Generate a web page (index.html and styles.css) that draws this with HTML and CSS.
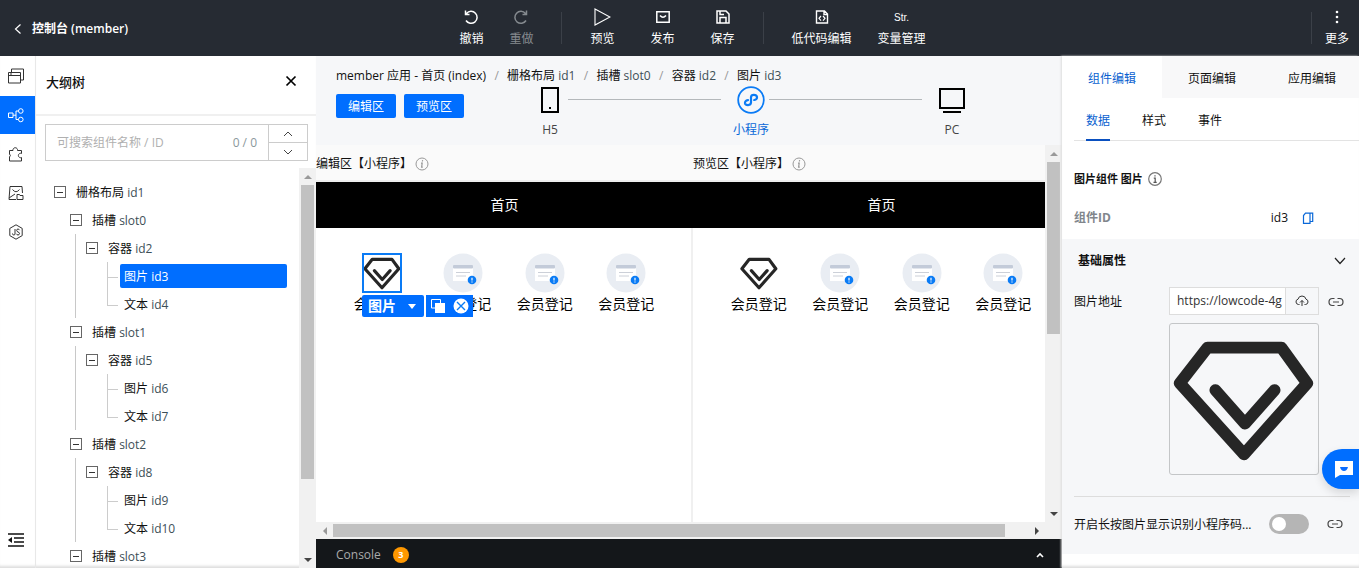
FILE: index.html
```html
<!DOCTYPE html>
<html lang="zh-CN">
<head>
<meta charset="utf-8">
<title>控制台 (member)</title>
<link rel="stylesheet" href="styles.css">
</head>
<body>
<svg class="defs" aria-hidden="true">
  <symbol id="gem" viewBox="0 0 150 152">
    <g fill="none" stroke="#262626" stroke-linecap="round" stroke-linejoin="round" stroke-width="12">
      <path d="M38 24H113L139 60L75 132L10 60Z"/>
      <path d="M46 67L76 101L106 67"/>
    </g>
  </symbol>
  <symbol id="card" viewBox="0 0 40 40">
    <circle cx="20" cy="20" r="19.500" fill="#e9edf3"/>
    <path d="M10 15H30V28H10Z" fill="#fff"/>
    <rect x="10" y="12" width="20" height="3.500" rx="1" fill="#c3cbd9"/>
    <path d="M13 19.500H27M13 23H23" stroke="#ccd0d8"/>
    <circle cx="29" cy="27" r="4.300" fill="#0a7bf5"/>
    <path d="M29 24.800V27.400M29 28.400V29.400" stroke="#fff" stroke-width="1.200"/>
  </symbol>
  <symbol id="link" viewBox="0 0 16 12">
    <path d="M6.500 2.500H4.500a3.500 3.500 0 0 0 0 7H6.500M9.500 2.500H11.500a3.500 3.500 0 0 1 0 7H9.500M5 6H11" fill="none" stroke="#444" stroke-width="1.200"/>
  </symbol>
  <symbol id="info" viewBox="0 0 14 14">
    <circle cx="7" cy="7" r="6" fill="none" stroke="currentColor"/>
    <path d="M7.600 3.200L7.400 4.500M6 6.200H7.200L6.600 10.200H7.800" fill="none" stroke="currentColor" stroke-width="1.200"/>
  </symbol>
</svg>

<header class="topbar">
  <div class="topbar-side">
    <a class="back" href="#"><svg width="8" height="12" viewBox="0 0 8 12"><path d="M6.500 1.500L1.500 6L6.500 10.500" fill="none" stroke="#fff" stroke-width="1.200"/></svg>控制台 (member)</a>
  </div>
  <nav class="actions">
    <div class="group">
      <button class="action"><svg viewBox="0 0 18 18"><path d="M4.500 5.500A6 6 0 1 1 4 12.500M3.500 2.500V6.500H7.500" fill="none" stroke="#fff" stroke-width="1.500"/></svg>撤销</button>
      <button class="action" disabled><svg viewBox="0 0 18 18"><path d="M13.500 5.500A6 6 0 1 0 14 12.500M14.500 2.500V6.500H10.500" fill="none" stroke="#858a8f" stroke-width="1.500"/></svg>重做</button>
    </div>
    <span class="rule"></span>
    <div class="group wide">
      <button class="action"><svg viewBox="0 0 18 18"><path d="M2 1L17 9L2 17Z" fill="none" stroke="#fff" stroke-width="1.100"/></svg>预览</button>
      <button class="action"><svg viewBox="0 0 18 18"><path d="M2.800 3.800H15.200V14.200H2.800ZM6 7.500Q9 11 12 7.500" fill="none" stroke="#fff" stroke-width="1.500"/></svg>发布</button>
      <button class="action"><svg viewBox="0 0 18 18"><path d="M3 3H12L15 6V15H3ZM6 15V9.500H12V15M6 3V6.500H10" fill="none" stroke="#fff" stroke-width="1.500"/></svg>保存</button>
    </div>
    <span class="rule"></span>
    <div class="group">
      <button class="action"><svg viewBox="0 0 18 18"><path d="M3.500 3H11.500L14.500 6V15H3.500ZM11 3V6.500H14.500" fill="none" stroke="#fff" stroke-width="1.400"/><path d="M8 8L6 10.300L8 12.600M10 8L12 10.300L10 12.600" fill="none" stroke="#fff" stroke-width="1.200"/></svg>低代码编辑</button>
      <button class="action"><span class="glyph">Str.</span>变量管理</button>
    </div>
  </nav>
  <div class="topbar-side end">
    <span class="rule"></span>
    <button class="action"><svg viewBox="0 0 18 18" fill="#fff"><circle cx="9" cy="4" r="1.300"/><circle cx="9" cy="9" r="1.300"/><circle cx="9" cy="14" r="1.300"/></svg>更多</button>
  </div>
</header>

<div class="workspace">
  <nav class="rail">
    <button aria-label="页面"><svg viewBox="0 0 16 16"><path d="M.500 4.500H12.500V15H.500ZM.500 7.500H12.500M3.500 4.500V1H15.500V12H12.500M2 6H4" fill="none" stroke="#333"/></svg></button>
    <button class="on" aria-label="大纲树"><svg viewBox="0 0 16 16"><g fill="none" stroke="#fff"><path d="M.500 6H5V10.500H.500ZM5 8.200H8M10.500 4H8V12.500H10.500"/><circle cx="12.800" cy="4" r="2.300"/><circle cx="12.800" cy="12.500" r="2.300"/></g></svg></button>
    <button aria-label="组件"><svg viewBox="0 0 16 16"><path d="M1.500 4.500H5A2.300 2.300 0 1 1 9.500 4.500H13.500V7.500A2.200 2.200 0 1 0 13.500 11.500V15H1.500V11A2 2 0 0 0 1.500 8Z" fill="none" stroke="#333"/></svg></button>
    <button aria-label="资源"><svg viewBox="0 0 16 16"><path d="M8 14.500H1L2 1.500H14L14.500 8M4.500 4.500Q8 9 11.500 4.500M1 13L7 9M9 9.500H11.500L12 10.500H15V14.500H9Z" fill="none" stroke="#333"/></svg></button>
    <button aria-label="脚本"><svg viewBox="0 0 16 16"><path d="M8 .800L14.200 4.400V11.600L8 15.200L1.800 11.600V4.400ZM7 5V10Q7 11 5.800 11Q4.500 11 4.500 9.500M11.500 6.200Q11 5 10 5Q8.700 5 8.700 6.400Q8.700 7.500 10 8Q11.600 8.500 11.500 9.600Q11.300 11 10 11Q8.800 11 8.500 9.800" fill="none" stroke="#333"/></svg></button>
    <button class="fold" aria-label="收起"><svg viewBox="0 0 18 16"><path d="M1 2H17M7 6H17M7 10H17M1 14H17" stroke="#111" stroke-width="1.700"/><path d="M5 5V11L1 8Z" fill="#111"/></svg></button>
  </nav>

  <aside class="outline">
    <div class="outline-head"><h2>大纲树</h2><button aria-label="关闭"><svg width="12" height="12" viewBox="0 0 12 12"><path d="M1.500 1.500L10.500 10.500M10.500 1.500L1.500 10.500" stroke="#000" stroke-width="1.700"/></svg></button></div>
    <div class="search">
      <input type="text" aria-label="搜索" placeholder="可搜索组件名称 / ID">
      <span class="count">0 / 0</span>
      <div class="steps">
        <button aria-label="上一个"><svg width="10" height="6" viewBox="0 0 10 6"><path d="M1 5L5 1L9 5" fill="none" stroke="#444"/></svg></button>
        <button aria-label="下一个"><svg width="10" height="6" viewBox="0 0 10 6"><path d="M1 1L5 5L9 1" fill="none" stroke="#444"/></svg></button>
      </div>
    </div>
    <div class="tree-area">
      <ul class="tree">
        <li><div class="node"><i class="toggle"></i><span>栅格布局 <em>id1</em></span></div>
          <ul>
            <li class="slot"><div class="node"><i class="toggle"></i><span>插槽 <em>slot0</em></span></div>
              <ul><li><div class="node"><i class="toggle"></i><span>容器 <em>id2</em></span></div>
                <ul><li class="leaf"><div class="node selected"><span>图片 <em>id3</em></span></div></li><li class="leaf"><div class="node"><span>文本 <em>id4</em></span></div></li></ul></li></ul></li>
            <li class="slot"><div class="node"><i class="toggle"></i><span>插槽 <em>slot1</em></span></div>
              <ul><li><div class="node"><i class="toggle"></i><span>容器 <em>id5</em></span></div>
                <ul><li class="leaf"><div class="node"><span>图片 <em>id6</em></span></div></li><li class="leaf"><div class="node"><span>文本 <em>id7</em></span></div></li></ul></li></ul></li>
            <li class="slot"><div class="node"><i class="toggle"></i><span>插槽 <em>slot2</em></span></div>
              <ul><li><div class="node"><i class="toggle"></i><span>容器 <em>id8</em></span></div>
                <ul><li class="leaf"><div class="node"><span>图片 <em>id9</em></span></div></li><li class="leaf"><div class="node"><span>文本 <em>id10</em></span></div></li></ul></li></ul></li>
            <li class="slot"><div class="node"><i class="toggle"></i><span>插槽 <em>slot3</em></span></div></li>
          </ul>
        </li>
      </ul>
      <div class="vbar"><i class="arrow up"></i><i class="thumb tree-thumb"></i><i class="arrow down"></i></div>
    </div>
  </aside>

  <main class="stage">
    <div class="stage-head">
      <div class="crumbs"><span>member 应用 - 首页 (index)</span><b>/</b><span>栅格布局 <em>id1</em></span><b>/</b><span>插槽 <em>slot0</em></span><b>/</b><span>容器 <em>id2</em></span><b>/</b><span>图片 <em>id3</em></span></div>
      <div class="modes">
        <div class="switches"><button>编辑区</button><button>预览区</button></div>
        <div class="devices">
          <button class="device"><svg viewBox="0 0 28 28"><path d="M6 2H22V26H6Z" fill="none" stroke="#000" stroke-width="2"/><path d="M13 21H15V23H13Z"/></svg>H5</button>
          <span class="wire"></span>
          <button class="device on"><svg viewBox="0 0 28 28"><g fill="none" stroke="#0a7bf5" stroke-width="1.800"><circle cx="14" cy="14" r="12.800"/><path d="M11 14.200C8.500 14.500 7.800 16 8 17.200C8.500 19.600 13.800 20 14 16.500V11.300C14.200 8 19.500 8.400 20 11C20.200 12.500 19 13.700 17.200 14" stroke-width="2.200" stroke-linecap="round"/></g></svg>小程序</button>
          <span class="wire"></span>
          <button class="device"><svg viewBox="0 0 28 28"><path d="M2 3H26V22H2ZM5 26H23" fill="none" stroke="#000" stroke-width="2"/></svg>PC</button>
        </div>
      </div>
    </div>

    <div class="canvas">
      <div class="panes">
        <section class="pane">
          <h3>编辑区【小程序】<svg width="14" height="14"><use href="#info"/></svg></h3>
          <div class="phone">
            <div class="navbar">首页</div>
            <div class="cells">
              <div class="cell picked"><svg><use href="#gem"/></svg><span>会员登记</span>
                <div class="tools"><button class="tag">图片<svg width="8" height="5" viewBox="0 0 8 5"><path d="M0 0H8L4 5Z" fill="#fff"/></svg></button><div class="ops"><button aria-label="复制"><svg width="16" height="16" viewBox="0 0 16 16"><path d="M5 10H1.500V1.500H10.500V5" fill="none" stroke="#fff"/><path d="M5 5H15V15H5Z" fill="#fff"/></svg></button><button aria-label="删除"><svg width="16" height="16" viewBox="0 0 16 16"><circle cx="8" cy="8" r="7.500" fill="#fff"/><path d="M4 4L12 12M12 4L4 12" stroke="#0a7bf5" stroke-width="1.400"/></svg></button></div></div>
              </div>
              <div class="cell"><svg><use href="#card"/></svg><span>会员登记</span></div>
              <div class="cell"><svg><use href="#card"/></svg><span>会员登记</span></div>
              <div class="cell"><svg><use href="#card"/></svg><span>会员登记</span></div>
            </div>
          </div>
        </section>
        <section class="pane">
          <h3>预览区【小程序】<svg width="14" height="14"><use href="#info"/></svg></h3>
          <div class="phone">
            <div class="navbar">首页</div>
            <div class="cells">
              <div class="cell"><svg><use href="#gem"/></svg><span>会员登记</span></div>
              <div class="cell"><svg><use href="#card"/></svg><span>会员登记</span></div>
              <div class="cell"><svg><use href="#card"/></svg><span>会员登记</span></div>
              <div class="cell"><svg><use href="#card"/></svg><span>会员登记</span></div>
            </div>
          </div>
        </section>
      </div>
      <div class="vbar"><i class="arrow up"></i><i class="thumb stage-thumb"></i><i class="arrow down"></i></div>
      <div class="hbar"><i class="arrow left"></i><i class="thumb"></i><i class="arrow right"></i></div>
    </div>

    <button class="console"><span>Console</span><b>3</b><svg width="8" height="6" viewBox="0 0 8 6"><path d="M1 5L4 2L7 5" fill="none" stroke="#fff" stroke-width="1.600"/></svg></button>
  </main>

  <aside class="props">
    <div class="tabs"><button class="on">组件编辑</button><button>页面编辑</button><button>应用编辑</button></div>
    <div class="subtabs"><button class="on">数据</button><button>样式</button><button>事件</button></div>
    <div class="summary">
      <h3>图片组件 图片<svg width="14" height="14" viewBox="0 0 14 14"><circle cx="7" cy="7" r="6.300" fill="none" stroke="#777" stroke-width="1.200"/><path d="M7 3.300V4.600M5.800 6.200H7.200V10.500M5.500 10.300H8.700" fill="none" stroke="#555" stroke-width="1.200"/></svg></h3>
      <div class="idrow"><strong>组件ID</strong><span>id3</span><button aria-label="复制ID"><svg width="12" height="12" viewBox="0 0 12 12"><path d="M8 1.200V11.300H1.500V3.500L3.500 1.200H10.700V9.500H8" fill="none" stroke="#0a68d8" stroke-width="1.200"/></svg></button></div>
    </div>
    <section class="basic">
      <h3>基础属性<svg width="12" height="8" viewBox="0 0 12 8"><path d="M1 1L6 6.500L11 1" fill="none" stroke="#222" stroke-width="1.200"/></svg></h3>
      <div class="field">
        <label for="src">图片地址</label>
        <div class="source">
          <div class="combo"><input id="src" type="text" value="https://lowcode-4g"><button aria-label="上传"><svg width="14" height="12" viewBox="0 0 14 12"><path d="M4.500 9.500H3.500A2.700 2.700 0 0 1 3 4.200A4.100 4.100 0 0 1 11 4.200A2.700 2.700 0 0 1 10.500 9.500H9.500M7 11V5.500M5 7.500L7 5.500L9 7.500" fill="none" stroke="#333"/></svg></button></div>
          <div class="preview"><svg viewBox="0 0 150 152"><use href="#gem"/></svg></div>
        </div>
        <button class="bind" aria-label="绑定"><svg width="16" height="12"><use href="#link"/></svg></button>
      </div>
      <div class="flag">
        <label for="press">开启长按图片显示识别小程序码...</label>
        <input id="press" type="checkbox">
        <button aria-label="绑定"><svg width="16" height="12"><use href="#link"/></svg></button>
      </div>
    </section>
  </aside>
</div>
<button class="chat" aria-label="客服"><svg width="18" height="18" viewBox="0 0 18 18"><path d="M0 1H18V15H5L0 18Z" fill="#fff"/><path d="M5 7H13Q12 11 9 11Q6 11 5 7Z" fill="#0a6cff"/></svg></button>
</body>
</html>
```
FILE: styles.css
```css
* { box-sizing: border-box; }
body {
  margin: 0;
  height: 100vh;
  display: flex;
  flex-direction: column;
  overflow: hidden;
  font: 12px/20px "Open Sans", "Noto Sans CJK SC", sans-serif;
  color: #111;
  background: #fff;
}
button, input { font: inherit; color: inherit; }
button { padding: 0; border: 0; background: none; cursor: pointer; white-space: nowrap; }
h2, h3, ul { margin: 0; padding: 0; }
li { list-style: none; }
svg { display: block; flex: none; }
em { font-style: normal; color: #3d4f57; }
.defs { position: absolute; width: 0; height: 0; }

.topbar { flex: none; height: 56px; display: flex; align-items: center; background: #262b33; color: #fff; }
.topbar-side { flex: 1; display: flex; align-items: center; padding-left: 14px; }
.topbar-side.end { justify-content: flex-end; gap: 13px; padding: 0 10px 0 0; }
.back { display: flex; align-items: center; gap: 10px; padding-top: 2px; color: #fff; font-weight: 600; text-decoration: none; white-space: nowrap; }
.actions { display: flex; align-items: center; gap: 28px; padding-left: 22px; }
.group { display: flex; gap: 26px; }
.group.wide { gap: 36px; }
.rule { width: 1px; height: 32px; background: #3b4048; }
.action { display: flex; flex-direction: column; align-items: center; gap: 3px; }
.action svg { width: 18px; height: 18px; }
.action:disabled { color: #858a8f; }
.glyph { height: 18px; font: 10px/20px "Liberation Sans", sans-serif; }

.workspace { flex: 1; min-height: 0; display: flex; }
.rail { flex: none; width: 36px; display: flex; flex-direction: column; gap: 1px; padding: 1px 0 9px; border-right: 1px solid #e8e8e8; box-shadow: inset 0 -4px 3px -2px #ddd; }
.rail button { height: 38px; display: grid; place-items: center; padding-right: 4px; }
.rail svg { width: 16px; height: 16px; }
.rail .on { background: #006eff; }
.rail .fold { margin-top: auto; padding: 0 3px 0 0; }
.rail .fold svg { width: 18px; }

.outline { flex: none; width: 280px; display: flex; flex-direction: column; box-shadow: inset 0 -4px 3px -2px #ddd; }
.outline-head { flex: none; height: 60px; display: flex; align-items: center; justify-content: space-between; padding: 0 19px 8px 10px; border-bottom: 2px solid #f0f0f0; }
.outline-head h2 { padding-top: 2px; font-size: 13px; font-weight: 500; }
.search { flex: none; height: 37px; display: flex; margin: 8px 8px 7px 9px; border: 1px solid #ccc; }
.search input { flex: 1; min-width: 0; padding: 0 11px; border: 0; background: none; }
.search input::placeholder { color: #b0b0b0; opacity: 1; }
.count { align-self: center; padding-right: 11px; color: #8b989c; }
.steps { width: 39px; display: grid; border-left: 1px solid #ccc; }
.steps button { display: grid; place-items: center; }
.steps button + button { border-top: 1px solid #ccc; }
.tree-area { flex: 1; min-height: 0; display: flex; overflow: hidden; }
.tree { flex: 1; padding: 10px 12px 0 18px; }
.tree ul { padding-left: 16px; position: relative; }
.node { display: flex; align-items: center; gap: 6px; padding: 2px 0; }
.node span { flex: 1; padding: 3px 4px 1px; border-radius: 2px; }
.toggle { width: 12px; height: 12px; border: 1px solid #666; background: linear-gradient(#333, #333) center / 6px 1px no-repeat; }
.slot > ul::before { content: ""; position: absolute; left: 5px; top: 0; bottom: 0; border-left: 1px solid #c8c8c8; }
.leaf { position: relative; padding-left: 18px; }
.leaf::before { content: ""; position: absolute; left: 5px; top: 0; width: 10px; height: 15px; border: solid #ccc; border-width: 0 0 1px 1px; }
.leaf:not(:last-child)::after { content: ""; position: absolute; left: 5px; top: 0; bottom: 0; border-left: 1px solid #ccc; }
.selected span { background: #006eff; color: #fff; }
.selected em { color: #fff; }

.vbar { flex: none; width: 17px; display: flex; flex-direction: column; align-items: center; background: #f1f1f1; }
.arrow { flex: none; width: 17px; height: 17px; display: grid; place-items: center; }
.arrow::before { content: ""; border: 4px solid transparent; }
.up::before { border-top: 0; border-bottom-color: #999; }
.down { margin-top: auto; }
.down::before { border-bottom: 0; border-top-color: #444; }
.left::before { border-left: 0; border-right-color: #999; }
.right { margin-left: auto; }
.right::before { border-right: 0; border-left-color: #444; }
.thumb { width: 13px; background: #c1c1c1; }
.tree-thumb { height: 294px; }
.stage-thumb { height: 172px; }

.stage { flex: 1; min-width: 0; display: flex; flex-direction: column; }
.stage-head { flex: none; padding: 10px 96px 5px 20px; background: #f6f7f9; }
.crumbs { display: flex; white-space: nowrap; }
.crumbs b { width: 21px; text-align: center; font-weight: 400; color: #999; }
.modes { display: flex; gap: 72px; }
.switches { display: flex; gap: 8px; padding-top: 8px; }
.switches button { width: 60px; height: 24px; padding-top: 2px; border-radius: 2px; background: #006eff; color: #fff; }
.devices { flex: 1; display: flex; align-items: flex-start; }
.device { width: 28px; display: flex; flex-direction: column; align-items: center; gap: 6px; color: #444; }
.device svg { width: 28px; height: 28px; }
.device.on { color: #0a68d8; }
.wire { flex: 1; height: 1px; margin: 13px 16px 0 4px; background: #b4b8bb; }

.canvas { flex: 1; min-height: 0; display: grid; grid-template: minmax(0, 1fr) 17px / minmax(0, 1fr) 17px; background: #fafafa; }
.panes { display: flex; overflow: hidden; }
.pane { flex: none; width: 377px; display: flex; flex-direction: column; }
.pane h3 { height: 37px; display: flex; align-items: center; padding-top: 2px; font-size: 12px; font-weight: 400; border-bottom: 2px solid #eee; }
.pane h3 svg { color: #999; margin-left: 3px; }
.phone { flex: 1; background: #fff; border-right: 2px solid #f0f0f0; }
.navbar { height: 46px; margin-right: -2px; background: #000; color: #fff; font-size: 14px; line-height: 46px; text-align: center; }
.cells { display: grid; grid-template-columns: repeat(4, 1fr); padding: 25px 24px 0 25px; }
.cell { position: relative; display: flex; flex-direction: column; align-items: center; font-size: 14px; color: #000; }
.cell svg { width: 40px; height: 40px; }
.cell > span { line-height: 22px; }
.picked > svg { outline: 2px solid #0a7bf5; outline-offset: -2px; }
.tools { position: absolute; z-index: 1; left: 21px; top: 42px; display: flex; gap: 2px; }
.tools svg { width: auto; height: auto; }
.tag { height: 22px; display: flex; align-items: center; gap: 12px; padding: 0 8px 0 6px; border-radius: 2px; background: #006eff; color: #fff; font-weight: 700; }
.ops { display: flex; align-items: center; gap: 7px; padding: 0 4px; background: #006eff; }
.hbar { grid-column: 1 / -1; display: flex; align-items: center; padding-right: 17px; background: #f1f1f1; }
.hbar .thumb { width: 672px; height: 13px; }
.console { flex: none; height: 29px; display: flex; align-items: center; gap: 12px; padding: 2px 18px 0 20px; background: #14171a; color: #aaa; font-weight: 500; }
.console b { width: 16px; height: 16px; border-radius: 50%; background: #ff9800; color: #fff; font-size: 9px; line-height: 16px; }
.console svg { margin-left: auto; }

.props { flex: none; width: 297px; box-shadow: inset 0 -4px 3px -2px #ddd, -1px 0 2px #ddd; }
.tabs { display: flex; height: 42px; }
.tabs button { flex: none; width: 100px; background: #f8f8f9; padding-top: 3px; }
.tabs .on { background: #fff; color: #0a5fd0; }
.subtabs { display: flex; gap: 32px; height: 43px; margin-left: 12px; padding-left: 12px; border-bottom: 1px solid #e3e3e3; }
.subtabs button { height: 43px; padding-top: 4px; border-bottom: 2px solid transparent; }
.subtabs .on { color: #0a5fd0; border-color: #0a50c0; }
.summary { padding: 28px 12px 11px; }
.summary h3 { display: flex; align-items: center; gap: 5px; font-size: 11px; font-weight: 700; }
.idrow { display: flex; align-items: center; margin-top: 19px; padding-right: 33px; }
.idrow strong { flex: 1; color: #81868c; }
.idrow button { margin-left: 14px; }
.basic { padding: 12px 9px 19px 12px; background: #f6f7f9; }
.basic h3 { display: flex; align-items: center; justify-content: space-between; padding: 0 4px; font-size: 12px; font-weight: 700; }
.field { display: flex; margin-top: 16px; }
.field label { flex: 1; line-height: 30px; white-space: nowrap; }
.source { width: 150px; }
.combo { display: flex; height: 28px; border: 1px solid #ddd; background: #fff; }
.combo input { flex: 1; min-width: 0; padding: 0 2px 0 7px; border: 0; outline: 0; background: none; color: #333; }
.combo button { width: 33px; display: grid; place-items: center; border-left: 1px solid #ddd; background: #f6f7f9; }
.preview { margin-top: 8px; border: 1px solid #c4c6c8; border-radius: 3px; }
.preview svg { width: 100%; }
.bind { height: 30px; margin: 0 6px 0 9px; }
.flag { display: flex; align-items: center; margin-top: 21px; padding: 17px 7px 0 0; border-top: 1px solid #ddd; }
.flag label { flex: 1; padding-top: 1px; white-space: nowrap; }
.flag input { appearance: none; display: flex; width: 40px; height: 20px; margin: 0 18px 0 0; padding: 3px; border-radius: 10px; background: #b5b5b5; }
.flag input::before { content: ""; width: 14px; height: 14px; border-radius: 50%; background: #fff; }
.chat { position: fixed; right: 0; bottom: 79px; width: 37px; height: 40px; display: grid; place-items: center; padding-left: 6px; border-radius: 20px 0 0 20px; background: #006eff; box-shadow: 0 4px 10px #0002; }
```
